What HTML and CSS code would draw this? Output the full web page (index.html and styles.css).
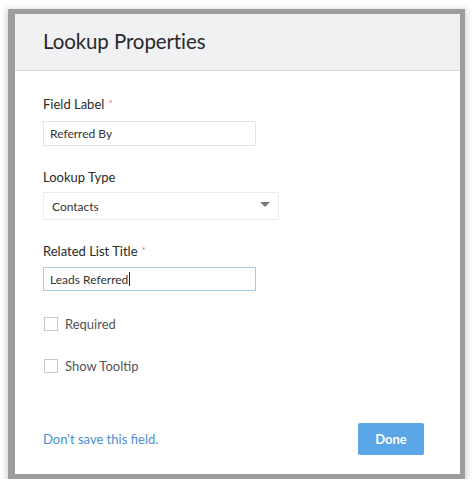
FILE: index.html
```html
<!DOCTYPE html>
<html>
<head>
<meta charset="utf-8">
<link rel="stylesheet" href="styles.css">
</head>
<body>
<div class="frame">
  <div class="dialog">
    <div class="header"><h1 class="title">Lookup Properties</h1></div>
    <div class="content">
      <div class="label l1">Field Label <span class="req">*</span></div>
      <div class="input in1">Referred By</div>
      <div class="label l2">Lookup Type</div>
      <div class="select">
        <span>Contacts</span>
        <svg class="caret" width="10" height="6" viewBox="0 0 10 6"><path d="M0 0h10L5 5z" fill="#7a7a7a"/></svg>
      </div>
      <div class="label l3">Related List Title <span class="req">*</span></div>
      <div class="input in3 focus">Leads Referred<span class="cursor"></span></div>
      <label class="check c1"><span class="box"></span>Required</label>
      <label class="check c2"><span class="box"></span>Show Tooltip</label>
    </div>
    <div class="footer">
      <a class="link">Don't save this field.</a>
      <button class="done">Done</button>
    </div>
  </div>
</div>
</body>
</html>
```
FILE: styles.css
```css
* { box-sizing: border-box; }
html, body { margin: 0; padding: 0; background: #fff; }
body {
  font-family: Lato, "Open Sans", sans-serif;
  color: #333;
  padding: 9px 0 0 8px;
}
.frame {
  width: 457px;
  border-style: solid;
  border-color: #9d9d9d;
  border-width: 5px 5px 5px 7px;
  box-shadow: 0 2px 6px 2px rgba(0,0,0,0.16);
}
.dialog {
  width: 445px;
  height: 460px;
  background: #fff;
  display: flex;
  flex-direction: column;
}
.header {
  height: 57px;
  background: #f0f1f3;
  border-bottom: 1px solid #d6d7d9;
  padding: 0 0 0 28px;
  display: flex;
  align-items: center;
}
.title {
  margin: 0;
  font-weight: 400;
  font-size: 20.5px;
  letter-spacing: -0.1px;
  color: #2a2a2a;
  padding-bottom: 3px;
}
.content {
  padding: 0 0 0 28px;
  display: flex;
  flex-direction: column;
  align-items: flex-start;
}
.label {
  font-size: 13px;
  line-height: 16px;
  color: #2a2a2a;
}
.req { color: #e06a5e; font-size: 9px; vertical-align: 2px; margin-left: 1px; }
.l1 { margin-top: 25px; }
.l2 { margin-top: 23px; }
.l3 { margin-top: 23px; }
.input {
  width: 213px;
  border: 1px solid #e3e3e3;
  font-size: 12px;
  color: #333;
  padding-left: 6px;
  display: flex;
  align-items: center;
}
.in1 { height: 25px; margin-top: 9px; }
.in3 { height: 24px; margin-top: 8px; border-color: #a9c9e8; }
.cursor { display: inline-block; width: 1px; height: 14px; background: #222; margin-left: 1px; }
.select {
  margin-top: 7px;
  width: 236px;
  height: 28px;
  border: 1px solid #ececec;
  padding: 0 8px 0 8px;
  font-size: 12px;
  color: #333;
  display: flex;
  align-items: center;
  justify-content: space-between;
}
.caret { margin-top: -2px; }
.check {
  display: flex;
  align-items: center;
  height: 16px;
  font-size: 13px;
  color: #555;
}
.c1 { margin-top: 25px; }
.c2 { margin-top: 26px; }
.box {
  width: 14px;
  height: 14px;
  border: 1px solid #c8c8c8;
  margin-left: 1px;
  margin-right: 7px;
  background: #fff;
}
.footer {
  margin-top: auto;
  padding: 0 36px 19px 28px;
  display: flex;
  align-items: center;
  justify-content: space-between;
}
.link {
  color: #4a8fd1;
  font-size: 13px;
}
.done {
  width: 66px;
  height: 32px;
  background: #5aa6e7;
  border: none;
  border-radius: 2px;
  color: #fff;
  font-family: inherit;
  font-weight: 700;
  font-size: 13px;
  padding: 0;
}
```
